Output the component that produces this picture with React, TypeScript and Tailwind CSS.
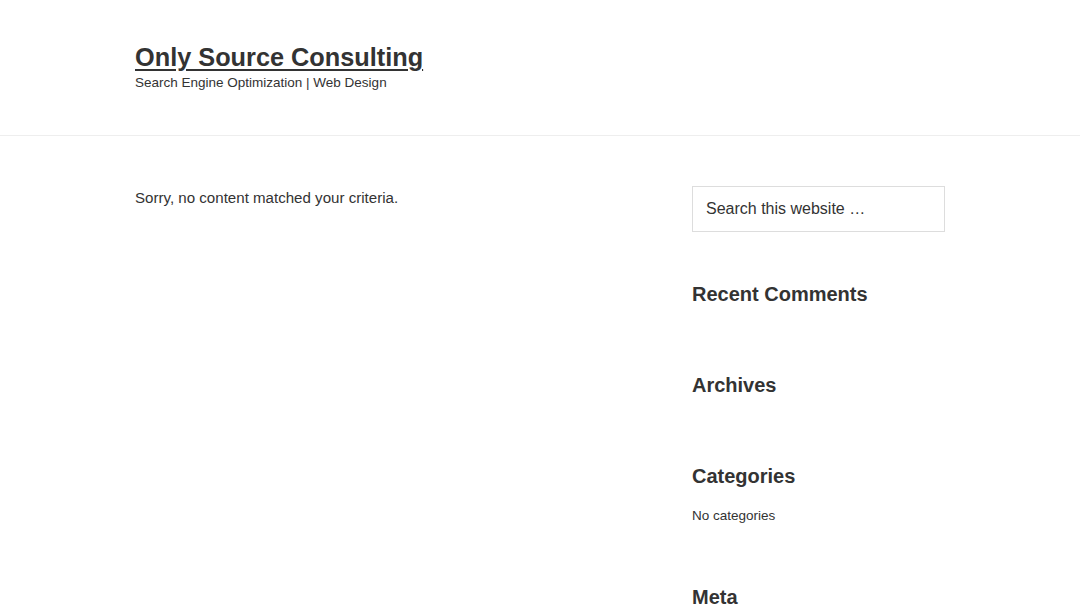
export default function App() {
  return (
    <div className="min-h-screen bg-white text-[#333] font-['Liberation_Sans',Arial,sans-serif]">
      <header className="border-b border-[#eee]">
        <div className="mx-auto w-[810px] pt-[42px] pb-[43px]">
          <h1 className="text-[25.3px] font-bold leading-[31px]">
            <a href="#" className="underline decoration-2 underline-offset-[3px]">
              Only Source Consulting
            </a>
          </h1>
          <p className="text-[13.5px] leading-[19px]">
            Search Engine Optimization | Web Design
          </p>
        </div>
      </header>

      <div className="mx-auto flex w-[810px] justify-between pt-[50px]">
        <main className="w-[500px]">
          <p className="text-[15.1px] leading-[24px]">
            Sorry, no content matched your criteria.
          </p>
        </main>

        <aside className="w-[253px]">
          <div className="h-[46px] border border-[#ddd] px-[13px] flex items-center text-[16px] text-[#333]">
            Search this website …
          </div>

          <section className="mt-[50px]">
            <h3 className="text-[20px] font-bold leading-[24px]">Recent Comments</h3>
          </section>

          <section className="mt-[67px]">
            <h3 className="text-[20px] font-bold leading-[24px]">Archives</h3>
          </section>

          <section className="mt-[67px]">
            <h3 className="text-[20px] font-bold leading-[24px]">Categories</h3>
            <ul className="mt-[18px] text-[13.5px] leading-[20px]">
              <li>No categories</li>
            </ul>
          </section>

          <section className="mt-[59px]">
            <h3 className="text-[20px] font-bold leading-[24px]">Meta</h3>
          </section>
        </aside>
      </div>
    </div>
  );
}
